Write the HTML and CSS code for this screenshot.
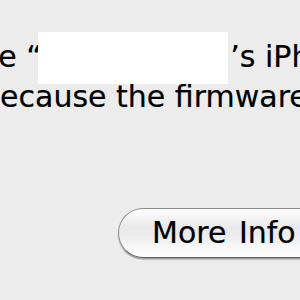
FILE: index.html
```html
<!DOCTYPE html>
<html>
<head>
<meta charset="utf-8">
<link rel="stylesheet" href="styles.css">
</head>
<body>
<div class="dialog">
  <div class="message">
    <div class="line line-first">the “<span class="redact"></span>’s iPhone</div>
    <div class="line line-second">because the firmware</div>
  </div>
  <div class="actions">
    <button class="aqua-btn">More Info</button>
  </div>
</div>
</body>
</html>
```
FILE: styles.css
```css
html, body {
  margin: 0;
  padding: 0;
}
body {
  width: 300px;
  height: 300px;
  overflow: hidden;
  background: #ececec;
}
.dialog {
  width: 300px;
  height: 300px;
  overflow: hidden;
  padding-top: 37px;
  box-sizing: border-box;
  font-family: "DejaVu Sans", sans-serif;
  color: #000;
}
.message {
  font-size: 30px;
  line-height: 40px;
}
.line {
  white-space: nowrap;
  -webkit-text-stroke: 0.2px #000;
}
.line-first {
  margin-left: -32.5px;
}
.line-second {
  margin-left: -19px;
}
.redact {
  display: inline-block;
  width: 190px;
  height: 52px;
  background: #fff;
  margin: -12px 2px -12px -3.5px;
  vertical-align: -4.5px;
  -webkit-text-stroke: 0;
}
.actions {
  display: flex;
  margin-top: 91px;
  padding-left: 118px;
}
.aqua-btn {
  flex: none;
  height: 50px;
  box-sizing: border-box;
  padding: 0 40px 0 33px;
  font-family: "DejaVu Sans", sans-serif;
  font-size: 30px;
  line-height: 48px;
  word-spacing: 3px;
  color: #000;
  -webkit-text-stroke: 0.2px #000;
  border: 1px solid #8c8c8c;
  border-bottom-color: #5e5e5e;
  border-radius: 25px;
  background: linear-gradient(#ffffff 0%, #f6f6f6 15%, #e9e9e9 40%, #ececec 55%, #f8f8f8 80%, #ffffff 100%);
  box-shadow: 0 1.5px 1px rgba(0, 0, 0, 0.35), inset 0 1px 0 #fff;
  white-space: nowrap;
}
```
